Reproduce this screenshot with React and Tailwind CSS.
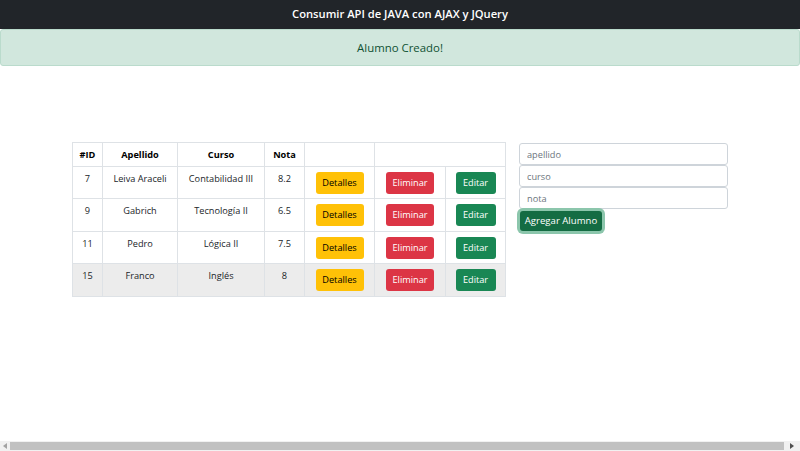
import React from "react";

const rows = [
  { id: 7, apellido: "Leiva Araceli", curso: "Contabilidad III", nota: "8.2", h: "h-[32px]" },
  { id: 9, apellido: "Gabrich", curso: "Tecnología II", nota: "6.5", h: "h-[33px]" },
  { id: 11, apellido: "Pedro", curso: "Lógica II", nota: "7.5", h: "h-[32px]" },
  { id: 15, apellido: "Franco", curso: "Inglés", nota: "8", h: "h-[33px]", hover: true },
];

export default function App() {
  return (
    <div
      className="w-[800px] h-[451px] flex flex-col bg-white text-[#212529] overflow-hidden"
      style={{ fontFamily: '"Open Sans", "Noto Sans", sans-serif' }}
    >
      <div className="h-[29px] shrink-0 bg-[#212529] flex items-center justify-center">
        <span className="text-white font-semibold text-[11.2px]">
          Consumir API de JAVA con AJAX y JQuery
        </span>
      </div>
      <div className="h-[37px] shrink-0 bg-[#d1e7dd] border border-[#badbcc] rounded-[3px] flex items-center justify-center">
        <span className="text-[#0f5132] text-[11.4px]">Alumno Creado!</span>
      </div>

      <div className="flex-1 flex items-start pt-[76px] pl-[72px]">
        <table className="table-fixed border-collapse w-[433px] text-[9.2px]">
          <colgroup>
            <col className="w-[30px]" />
            <col className="w-[75px]" />
            <col className="w-[87px]" />
            <col className="w-[40px]" />
            <col className="w-[70px]" />
            <col className="w-[71px]" />
            <col className="w-[60px]" />
          </colgroup>
          <thead>
            <tr className="h-[24px]">
              {["#ID", "Apellido", "Curso", "Nota", ""].map((h, i) => (
                <th key={i} className="border border-[#dee2e6] font-bold text-center align-middle px-1 text-[#000]">
                  {h}
                </th>
              ))}
              <th colSpan={2} className="border border-[#dee2e6]"></th>
            </tr>
          </thead>
          <tbody>
            {rows.map((r) => (
              <tr key={r.id} className={r.h + " " + (r.hover ? "bg-[#ececec]" : "bg-white")}>
                <td className="border border-[#dee2e6] text-center align-top pt-[5px]">{r.id}</td>
                <td className="border border-[#dee2e6] text-center align-top pt-[5px]">{r.apellido}</td>
                <td className="border border-[#dee2e6] text-center align-top pt-[5px]">{r.curso}</td>
                <td className="border border-[#dee2e6] text-center align-top pt-[5px]">{r.nota}</td>
                <td className="border border-[#dee2e6] align-middle">
                  <div className="flex justify-center">
                    <button className="w-[48px] h-[22px] rounded-[3px] bg-[#ffc107] text-[#000] text-[9.2px]">
                      Detalles
                    </button>
                  </div>
                </td>
                <td className="border border-[#dee2e6] align-middle">
                  <div className="flex justify-center">
                    <button className="w-[48px] h-[22px] rounded-[3px] bg-[#dc3545] text-white text-[9.2px]">
                      Eliminar
                    </button>
                  </div>
                </td>
                <td className="border border-[#dee2e6] align-middle">
                  <div className="flex justify-center">
                    <button className="w-[40px] h-[22px] rounded-[3px] bg-[#198754] text-white text-[9.2px]">
                      Editar
                    </button>
                  </div>
                </td>
              </tr>
            ))}
          </tbody>
        </table>

        <div className="ml-[13px] mt-[1px] w-[209px] flex flex-col">
          {["apellido", "curso", "nota"].map((p) => (
            <input
              key={p}
              placeholder={p}
              className="h-[22px] border border-[#ced4da] rounded-[3px] px-[7px] text-[9.2px] placeholder:text-[#6c757d] outline-none bg-white"
            />
          ))}
          <div className="flex pt-[2px] pl-[1px]">
            <button className="w-[82px] h-[20px] rounded-[3px] bg-[#146c43] text-white text-[9.6px] ring-[3px] ring-[#8cc6ac] whitespace-nowrap">
              Agregar Alumno
            </button>
          </div>
        </div>
      </div>

      <div className="h-[10px] shrink-0 bg-[#f1f1f1] flex items-center">
        <div className="w-[10px] flex justify-center">
          <svg width="4" height="6" viewBox="0 0 4 6"><path d="M4 0 L0 3 L4 6 Z" fill="#a3a3a3" /></svg>
        </div>
        <div className="flex-1 h-[8px] bg-[#c1c1c1]"></div>
        <div className="w-[16px] flex justify-center">
          <svg width="4" height="6" viewBox="0 0 4 6"><path d="M0 0 L4 3 L0 6 Z" fill="#505050" /></svg>
        </div>
      </div>
    </div>
  );
}
